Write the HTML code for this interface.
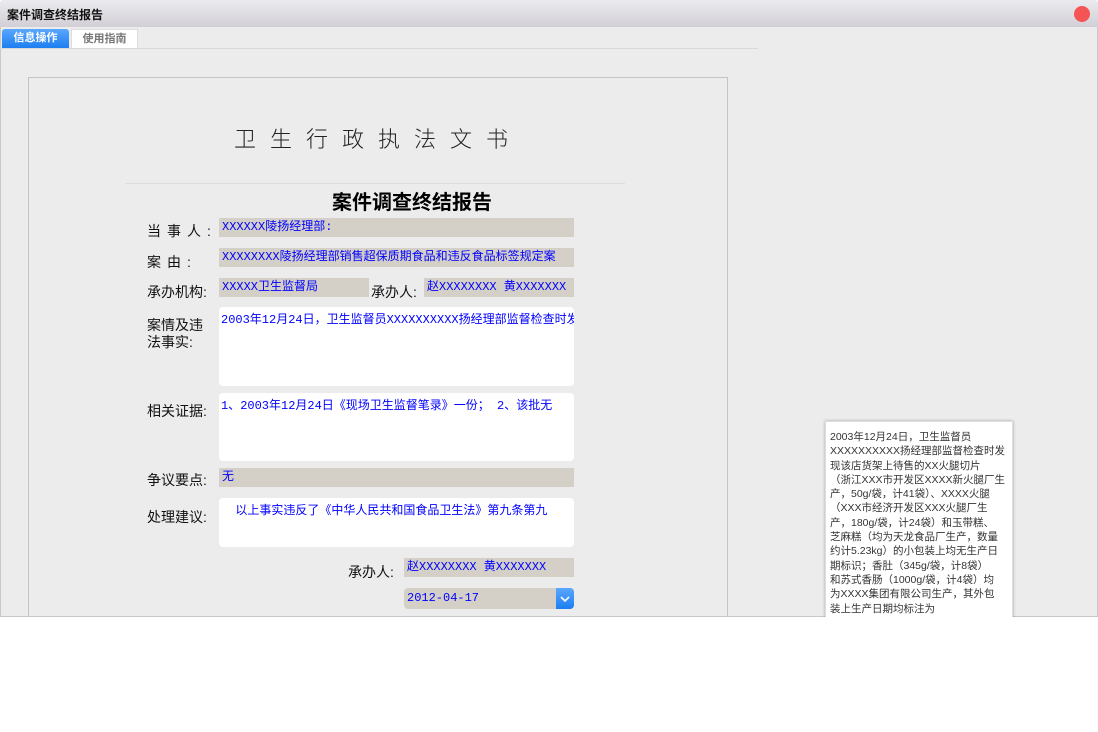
<!DOCTYPE html>
<html><head><meta charset="utf-8"><style>
*{margin:0;padding:0;box-sizing:border-box}
body{width:1098px;height:732px;background:#fff;position:relative;overflow:hidden;font-family:"Liberation Sans","Noto Sans CJK SC",sans-serif}
#win{position:absolute;left:0;top:0;width:1098px;height:617px;background:#ececec;overflow:hidden;border-radius:4px 4px 0 0;box-shadow:inset 0 0 0 1px #c8c8c8}
#tb{position:absolute;left:0;top:0;width:100%;height:27px;background:linear-gradient(#ebebee,#d2d0d6);font-size:12px;font-weight:bold;color:#111;padding:6px 0 0 7px}
#close{position:absolute;left:1074px;top:6px;width:16px;height:16px;border-radius:50%;background:#f55454}
.tab{position:absolute;top:29px;height:19px;font-size:11px;font-weight:bold;text-align:center;line-height:19px}
.a{position:absolute}
.lbl{position:absolute;font-size:14px;color:#111;font-family:"Liberation Sans","Noto Sans CJK SC",sans-serif;white-space:nowrap}
.fld{position:absolute;background:#d4d0c8;color:#00f;font-size:12px;padding:1px 3px;white-space:nowrap;overflow:hidden;font-family:"Liberation Mono","Noto Sans CJK SC",monospace;line-height:17px}
.ta{position:absolute;background:#fff;border-radius:4px;color:#00f;font-size:12px;padding:3px 2px;white-space:nowrap;overflow:hidden;font-family:"Liberation Mono","Noto Sans CJK SC",monospace}
#tip{position:absolute;left:825px;top:421px;width:188px;height:200px;background:#fff;border:1px solid #ddd;box-shadow:0 0 3px rgba(0,0,0,.3);font-size:10.5px;line-height:14.3px;color:#333;padding:8px 2px 0 4px;white-space:nowrap;overflow:hidden}
</style></head><body>
<div id="win">
<div id="tb">案件调查终结报告</div><div id="close"></div>
<div class="tab" style="left:2px;width:67px;background:linear-gradient(#5aa7ff,#1d7ef0);color:#fff;border-radius:3px 3px 0 0">信息操作</div>
<div class="tab" style="left:71px;width:67px;background:#fff;color:#777;border:1px solid #ddd;border-bottom:none">使用指南</div>
<div class="a" style="left:0;top:48px;width:758px;height:1px;background:#d8d8d8"></div>
<div class="a" style="left:28px;top:77px;width:700px;height:600px;border:1px solid #c4c4c4"></div>
<div class="a" style="left:234px;top:122px;font-size:22px;letter-spacing:14px;color:#222;font-weight:300;font-family:'Noto Sans CJK SC',sans-serif">卫生行政执法文书</div>
<div class="a" style="left:125px;top:183px;width:500px;height:1px;background:#dcdcdc"></div>
<div class="a" style="left:332px;top:186px;font-size:20px;font-weight:bold;color:#000;font-family:'Noto Sans CJK SC',sans-serif">案件调查终结报告</div>

<div class="lbl" style="left:147px;top:221px;letter-spacing:6px">当事人:</div>
<div class="fld" style="left:219px;top:218px;width:355px;height:19px">XXXXXX陵扬经理部:</div>
<div class="lbl" style="left:147px;top:252px;letter-spacing:6px">案由:</div>
<div class="fld" style="left:219px;top:248px;width:355px;height:19px">XXXXXXXX陵扬经理部销售超保质期食品和违反食品标签规定案</div>
<div class="lbl" style="left:147px;top:282px">承办机构:</div>
<div class="fld" style="left:219px;top:278px;width:150px;height:19px">XXXXX卫生监督局</div>
<div class="lbl" style="left:371px;top:282px">承办人:</div>
<div class="fld" style="left:424px;top:278px;width:150px;height:19px">赵XXXXXXXX 黄XXXXXXX</div>
<div class="lbl" style="left:147px;top:317px;line-height:17px">案情及违<br>法事实:</div>
<div class="ta" style="left:219px;top:307px;width:355px;height:79px">2003年12月24日，卫生监督员XXXXXXXXXX扬经理部监督检查时发</div>
<div class="lbl" style="left:147px;top:401px">相关证据:</div>
<div class="ta" style="left:219px;top:393px;width:355px;height:68px">1、2003年12月24日《现场卫生监督笔录》一份； 2、该批无</div>
<div class="lbl" style="left:147px;top:470px">争议要点:</div>
<div class="fld" style="left:219px;top:468px;width:355px;height:19px">无</div>
<div class="lbl" style="left:147px;top:507px">处理建议:</div>
<div class="ta" style="left:219px;top:498px;width:355px;height:49px">&nbsp;&nbsp;以上事实违反了《中华人民共和国食品卫生法》第九条第九</div>
<div class="lbl" style="left:348px;top:562px">承办人:</div>
<div class="fld" style="left:404px;top:558px;width:170px;height:19px">赵XXXXXXXX 黄XXXXXXX</div>
<div class="fld" style="left:404px;top:588px;width:170px;height:21px;border-radius:4px;line-height:19px">2012-04-17</div>
<div class="a" style="left:556px;top:588px;width:18px;height:21px;background:linear-gradient(#5aa7ff,#1d7ef0);border-radius:0 4px 4px 0"><svg width="18" height="21"><path d="M5 9l4 4 4-4" stroke="#fff" stroke-width="1.6" fill="none"/></svg></div>
</div>
<div id="tip">2003年12月24日，卫生监督员<br>XXXXXXXXXX扬经理部监督检查时发<br>现该店货架上待售的XX火腿切片<br>（浙江XXX市开发区XXXX新火腿厂生<br>产，50g/袋，计41袋）、XXXX火腿<br>（XXX市经济开发区XXX火腿厂生<br>产，180g/袋，计24袋）和玉带糕、<br>芝麻糕（均为天龙食品厂生产，数量<br>约计5.23kg）的小包装上均无生产日<br>期标识；香肚（345g/袋，计8袋）<br>和苏式香肠（1000g/袋，计4袋）均<br>为XXXX集团有限公司生产，其外包<br>装上生产日期均标注为</div>
<div class="a" style="left:0;top:617px;width:1098px;height:115px;background:#fff"></div>
</body></html>
